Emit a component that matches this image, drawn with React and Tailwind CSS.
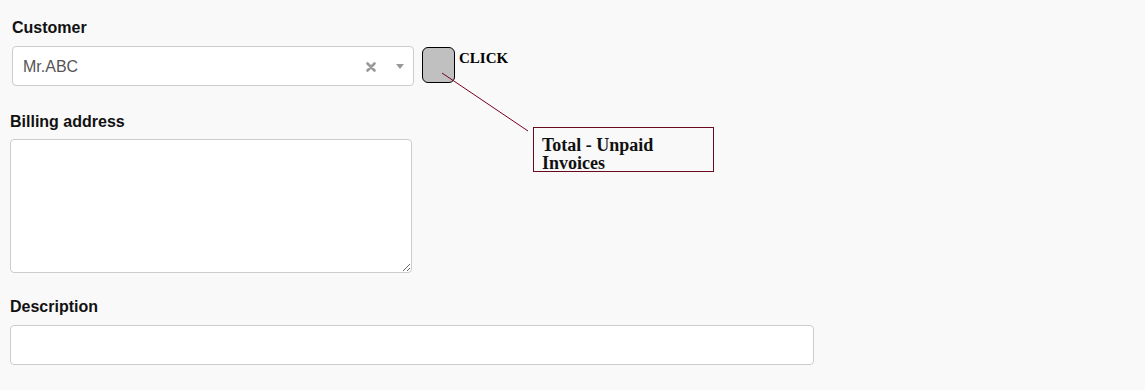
import React from "react";

export default function App() {
  return (
    <div className="relative min-h-[390px] w-full bg-[#f9f9f9] px-[10px] pt-[18px] font-['Liberation_Sans',Arial,sans-serif] text-[#111]">
      {/* Customer */}
      <div className="ml-[2px]">
        <div className="mb-[8px] text-[16px] font-bold leading-[20px]">Customer</div>
        <div className="flex items-start">
          <div className="flex h-[40px] w-[402px] items-center rounded-[4px] border border-[#cccccc] bg-white pl-[10px] pr-[9px]">
            <span className="mt-[2px] flex-1 text-[16px] leading-[20px] text-[#555555]">Mr.ABC</span>
            <svg width="10" height="10" viewBox="0 0 10 10" className="mr-[20px] mt-[2px]">
              <path d="M1.5 1.5 L8.5 8.5 M8.5 1.5 L1.5 8.5" stroke="#999999" strokeWidth="2.6" strokeLinecap="round" />
            </svg>
            <svg width="8" height="5" viewBox="0 0 8 5" className="mt-[1px]">
              <polygon points="0,0 8,0 4,5" fill="#999999" />
            </svg>
          </div>
          <button className="ml-[8px] mt-[1px] h-[36px] w-[33px] rounded-[6px] border border-black bg-[#c0c0c0]"></button>
          <span className="ml-[4px] mt-[2px] font-['Liberation_Serif','Times_New_Roman',serif] text-[15px] font-bold leading-[20px] text-black">
            CLICK
          </span>
        </div>
      </div>

      {/* Billing address */}
      <div className="mt-[26px] text-[16px] font-bold leading-[20px]">Billing address</div>
      <textarea className="mt-[7px] block h-[134px] w-[402px] rounded-[4px] border border-[#cccccc] bg-white outline-none"></textarea>

      {/* Description */}
      <div className="mt-[24px] text-[16px] font-bold leading-[20px]">Description</div>
      <input className="mt-[8px] block h-[40px] w-[804px] rounded-[4px] border border-[#cccccc] bg-white outline-none" />

      {/* Callout overlay */}
      <svg className="pointer-events-none absolute left-0 top-0" width="1145" height="390">
        <line x1="442" y1="73" x2="528" y2="131" stroke="#7a0020" strokeWidth="1" />
      </svg>
      <div className="absolute left-[533px] top-[127px] h-[45px] w-[181px] overflow-hidden border border-[#6b0a1f] bg-[#f9f9f9] pl-[8px] pt-[8px] font-['Liberation_Serif','Times_New_Roman',serif] text-[18px] font-bold leading-[18px] text-[#111]">
        Total - Unpaid
        <br />
        Invoices
      </div>
    </div>
  );
}
